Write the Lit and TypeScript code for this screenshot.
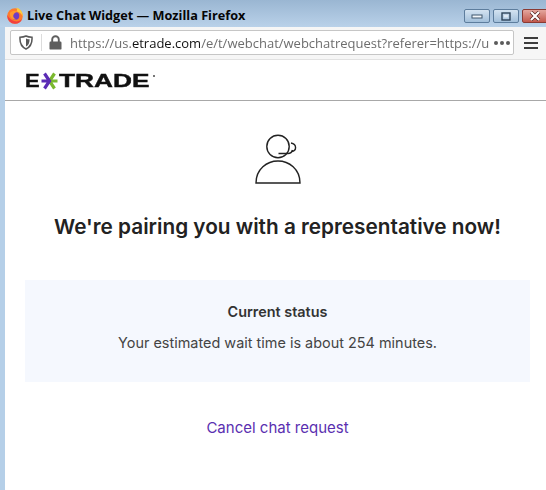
import { LitElement, html, css } from 'lit';
import { customElement } from 'lit/decorators.js';

@customElement('browser-chrome')
export class BrowserChrome extends LitElement {
    static styles = css`
        :host {
            display: block;
            font-family: 'Open Sans', sans-serif;
        }
        .titlebar {
            height: 27px;
            box-sizing: border-box;
            display: flex;
            align-items: center;
            padding: 3px 0 0 7px;
            gap: 4px;
            background: linear-gradient(#9ab6d2, #b9d1e9);
        }
        .title {
            flex: 1;
            font-size: 12.7px;
            font-weight: 700;
            color: #050505;
            white-space: nowrap;
        }
        .winbtns {
            display: flex;
            gap: 3px;
            align-self: flex-start;
            margin-top: 6px;
        }
        .winbtn {
            width: 26px;
            height: 14px;
            box-sizing: border-box;
            border: 1px solid #5d7d9d;
            border-radius: 2px;
            background: linear-gradient(#d4e3f1, #a2bfda);
            display: flex;
            align-items: center;
            justify-content: center;
        }
        .winbtn.close {
            margin-right: -2px;
            border-color: #8a3a33;
            background: linear-gradient(#e4a79e, #c2584c);
        }
        .toolbar {
            height: 33px;
            box-sizing: border-box;
            margin-left: 5px;
            padding: 3px 0 0 5px;
            display: flex;
            gap: 10px;
            background: #f6f6f6;
            border-bottom: 1px solid #e2e2e2;
        }
        .urlbar {
            width: 504px;
            height: 25px;
            box-sizing: border-box;
            flex: none;
            display: flex;
            align-items: center;
            background: #fff;
            border: 1px solid #c6c6c6;
            border-radius: 2px;
        }
        .shield {
            margin-left: 8px;
        }
        .sep {
            width: 1px;
            height: 17px;
            background: #dcdcdc;
            margin: 0 7px 0 8px;
        }
        .url {
            margin-left: 8px;
            flex: 1;
            min-width: 0;
            white-space: nowrap;
            font-size: 13px;
            color: #6d6d6d;
            -webkit-mask-image: linear-gradient(to left, transparent, #000 6px);
        }
        .url b {
            font-weight: 400;
            color: #111;
        }
        .dots {
            margin: 0 3px 0 0;
            display: flex;
            gap: 2px;
        }
        .dots i {
            width: 4px;
            height: 4px;
            border-radius: 50%;
            background: #5b5b5b;
        }
        .menu {
            width: 14px;
            height: 25px;
            display: flex;
            flex-direction: column;
            justify-content: center;
            gap: 3px;
        }
        .menu i {
            height: 2px;
            background: #3d3d3d;
        }
    `;

    render() {
        return html`
            <div class="titlebar">
                <svg width="16" height="17" viewBox="0 0 16 17">
                    <circle cx="8" cy="9" r="7.8" fill="#ff7b2b" />
                    <path d="M9 .6 C13 1.4 16 5 15.8 9.4 C14.4 6.4 12 4.6 9.6 4.4 C10.4 3.2 10 1.6 9 .6Z" fill="#ffc83a" />
                    <path d="M.4 8 C0 13 3.4 16.8 8 16.8 C11.4 16.8 14 15 15.2 12 C12 15 8 15 5 13 C2.8 11.6 1.4 10 .4 8Z" fill="#f2403f" />
                    <circle cx="8.4" cy="8.8" r="3.9" fill="#6f3cc4" />
                    <path d="M3 6 C5 3.6 8.6 3.6 11 5 C8.4 5.2 6.6 6.4 6.2 8.8 C6.2 10.6 7.4 12 9 12.4 C6 13 3.4 11 3 8Z" fill="#ff9a2e" />
                </svg>
                <span class="title">Live Chat Widget — Mozilla Firefox</span>
                <div class="winbtns">
                    <div class="winbtn">
                        <svg width="12" height="6" viewBox="0 0 12 6"><rect x="1" y="2" width="10" height="3" fill="#f2f6fa" stroke="#3f566d" /></svg>
                    </div>
                    <div class="winbtn">
                        <svg width="10" height="9" viewBox="0 0 10 9"><rect x="1" y="1" width="8" height="7" fill="none" stroke="#2e445a" stroke-width="1.4" /><rect x="3" y="3" width="4" height="2.4" fill="#dfe9f3" /></svg>
                    </div>
                    <div class="winbtn close">
                        <svg width="12" height="10" viewBox="0 0 12 10"><path d="M2 1 L10 9 M10 1 L2 9" stroke="#4c1d18" stroke-width="3.4" /><path d="M2 1 L10 9 M10 1 L2 9" stroke="#fff" stroke-width="2.2" /></svg>
                    </div>
                </div>
            </div>
            <div class="toolbar">
                <div class="urlbar">
                    <svg class="shield" width="14" height="15" viewBox="0 0 14 15">
                        <path d="M7 1 C9 2 11 2.2 13 2.2 C13.4 8 11.4 12 7 14 C2.6 12 .6 8 1 2.2 C3 2.2 5 2 7 1Z" fill="none" stroke="#585858" stroke-width="1.5" />
                        <path d="M7 3.4 C8.2 4 9.4 4.2 10.6 4.2 C10.6 8 9.4 10.4 7 11.6Z" fill="#585858" />
                    </svg>
                    <span class="sep"></span>
                    <svg width="13" height="15" viewBox="0 0 13 15">
                        <path d="M3.2 7 V4.6 A3.3 3.3 0 0 1 9.8 4.6 V7" fill="none" stroke="#5e5e5e" stroke-width="1.9" />
                        <rect x="0.5" y="6.6" width="12" height="8" rx="1.2" fill="#5e5e5e" />
                    </svg>
                    <span class="url">https://us.<b>etrade.com</b>/e/t/webchat/webchatrequest?referer=https://u</span>
                    <span class="dots"><i></i><i></i><i></i></span>
                </div>
                <div class="menu"><i></i><i></i><i></i></div>
            </div>
        `;
    }
}

@customElement('app-root')
export class AppRoot extends LitElement {
    static styles = css`
        :host {
            display: block;
            width: 546px;
            height: 490px;
            overflow: hidden;
            background: #b5cfe8;
            font-family: Inter, sans-serif;
        }
        .page {
            margin-left: 5px;
            height: 430px;
            background: #fff;
            display: flex;
            flex-direction: column;
        }
        .header {
            height: 41px;
            box-sizing: border-box;
            border-bottom: 1px solid #a8a8a8;
            padding: 11px 0 0 20px;
        }
        .logo {
            display: flex;
            align-items: center;
            height: 20px;
            font-family: 'Liberation Sans', sans-serif;
            font-weight: 700;
            font-size: 17.5px;
            color: #111;
            -webkit-text-stroke: 0.4px #111;
        }
        .logo span {
            display: block;
            transform-origin: left center;
        }
        .logo .e {
            width: 16px;
            transform: scaleX(1.25);
        }
        .logo .trade {
            width: 93px;
            margin-left: 1px;
            transform: scaleX(1.5);
        }
        .logo .tm {
            width: 2px;
            height: 2px;
            margin: -10px 0 0 1px;
            background: #777;
        }
        .content {
            padding: 32px 16px 0 20px;
            display: flex;
            flex-direction: column;
            align-items: center;
        }
        h1 {
            margin: 25px 0 0;
            font-size: 20.75px;
            line-height: 30px;
            font-weight: 600;
            color: #222;
            white-space: nowrap;
        }
        .status {
            box-sizing: border-box;
            width: 505px;
            height: 102px;
            margin-top: 38px;
            padding-top: 22px;
            background: #f5f8fe;
            text-align: center;
        }
        .status h2 {
            margin: 0;
            font-size: 14.4px;
            line-height: 20px;
            font-weight: 600;
            color: #333;
        }
        .status p {
            margin: 11px 0 0;
            font-size: 14.45px;
            line-height: 20px;
            font-weight: 400;
            color: #444;
        }
        a {
            margin-top: 36px;
            font-size: 15px;
            line-height: 20px;
            color: #5a2fb0;
            text-decoration: none;
        }
    `;

    render() {
        return html`
            <browser-chrome></browser-chrome>
            <div class="page">
                <div class="header">
                    <div class="logo">
                        <span class="e">E</span>
                        <svg width="17" height="18" viewBox="0 0 17 18" fill="none" stroke-width="3.2">
                            <path d="M13.5 1.5 L8.5 9 L13.5 16.5 M8.5 9 H16.5" stroke="#7ab82e" />
                            <path d="M3.5 1.5 L8.5 9 L3.5 16.5 M0.5 9 H8.5" stroke="#5b2bb5" />
                        </svg>
                        <span class="trade">TRADE</span>
                        <span class="tm"></span>
                    </div>
                </div>
                <div class="content">
                    <svg width="48" height="54" viewBox="0 0 48 54" fill="none" stroke="#222" stroke-width="1.4">
                        <circle cx="24" cy="13.5" r="11.2" />
                        <path d="M2 50 H46 C46 36 35 28 24 28 C13 28 2 36 2 50Z" />
                        <path d="M24.5 20.5 H34 C36.5 20.5 38 19 38.5 17" />
                        <path d="M37 10 C43 11 43 18 37.5 18.5" />
                    </svg>
                    <h1>We're pairing you with a representative now!</h1>
                    <div class="status">
                        <h2>Current status</h2>
                        <p>Your estimated wait time is about 254 minutes.</p>
                    </div>
                    <a href="#">Cancel chat request</a>
                </div>
            </div>
        `;
    }
}
